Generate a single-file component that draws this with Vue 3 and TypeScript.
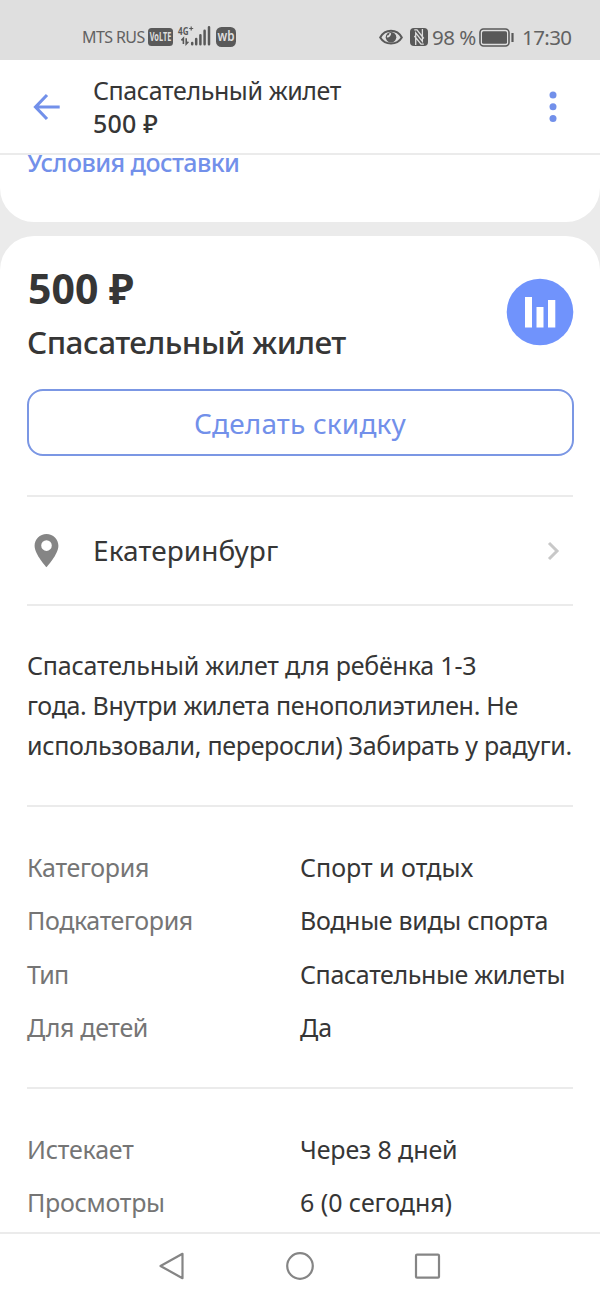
<script setup lang="ts">
interface Line { text: string; tracking: number }
interface Row { label: Line; value: Line }

const description: Line[] = [
  { text: 'Спасательный жилет для ребёнка 1-3', tracking: -0.19 },
  { text: 'года. Внутри жилета пенополиэтилен. Не', tracking: -0.33 },
  { text: 'использовали, переросли) Забирать у радуги.', tracking: -0.3 },
]

const details: Row[] = [
  { label: { text: 'Категория', tracking: -0.32 }, value: { text: 'Спорт и отдых', tracking: 0 } },
  { label: { text: 'Подкатегория', tracking: -0.38 }, value: { text: 'Водные виды спорта', tracking: -0.31 } },
  { label: { text: 'Тип', tracking: -0.8 }, value: { text: 'Спасательные жилеты', tracking: -0.38 } },
  { label: { text: 'Для детей', tracking: -0.32 }, value: { text: 'Да', tracking: 0 } },
]

const stats: Row[] = [
  { label: { text: 'Истекает', tracking: -0.2 }, value: { text: 'Через 8 дней', tracking: -0.12 } },
  { label: { text: 'Просмотры', tracking: -0.28 }, value: { text: '6 (0 сегодня)', tracking: -0.05 } },
]

const spacing = (line: Line) => ({ letterSpacing: `${line.tracking}px` })
</script>

<template>
  <div class="screen">
    <div class="status">
      <div class="status-left">
        <span class="carrier">MTS RUS</span>
        <svg class="volte" width="25" height="18" viewBox="0 0 25 18">
          <rect width="25" height="18" rx="3.5" fill="#595959" />
          <text x="12.5" y="13.2" text-anchor="middle" textLength="21.5" lengthAdjust="spacingAndGlyphs" class="badge-text">VoLTE</text>
        </svg>
        <svg class="signal" width="34" height="20" viewBox="0 0 34 20">
          <text x="0" y="8.8" textLength="10.5" lengthAdjust="spacingAndGlyphs" class="net-text">4G</text>
          <path d="M11.2 2.5h4M13.2 .5v4" stroke="#595959" stroke-width="1.2" />
          <path d="M5.4 18v-5.8l-2 2.2M8.2 12.2V18l2.2-2.3" fill="none" stroke="#595959" stroke-width="1.6" />
          <path d="M14.2 18.3v-1.4M18.2 18.3v-5.4M22.4 18.3V9.3M26.6 18.3V4.8M31 18.3V1.2" stroke="#595959" stroke-width="2.5" stroke-linecap="round" />
        </svg>
        <svg class="wb" width="20" height="20" viewBox="0 0 20 20">
          <rect width="20" height="20" rx="5.5" fill="#595959" />
          <text x="10" y="14.3" text-anchor="middle" textLength="17" lengthAdjust="spacingAndGlyphs" class="wb-text">wb</text>
        </svg>
      </div>
      <div class="status-right">
        <svg class="eye" width="24" height="17" viewBox="0 0 24 17">
          <path d="M1.2 8.5C6-.5 18-.5 22.8 8.5 18 16.5 6 16.5 1.2 8.5z" fill="none" stroke="#595959" stroke-width="2" />
          <circle cx="12" cy="8.3" r="5.3" fill="#595959" />
          <path d="M11.200 4.200a3 3 0 0 1-3.200 3.300" fill="none" stroke="#dfdfdf" stroke-width="1.800" />
        </svg>
        <svg class="nfc" width="18" height="18" viewBox="0 0 18 18">
          <rect width="18" height="18" rx="4" fill="#595959" />
          <path d="M5.700 17V4.800L12.400 13.300V1M4.300 1.800H7L13.800 10.500M13.800 16.200H11L4.400 8" fill="none" stroke="#dfdfdf" stroke-width="1.300" />
        </svg>
        <span class="percent">98 %</span>
        <svg class="battery" width="35" height="19" viewBox="0 0 35 19">
          <rect x="1" y="1" width="29" height="17" rx="3.500" fill="none" stroke="#595959" stroke-width="1.600" />
          <rect x="3" y="3.200" width="25" height="12.600" rx="1.500" fill="#595959" />
          <path d="M33.500 5v9" stroke="#595959" stroke-width="2.200" />
        </svg>
        <span class="clock">17:30</span>
      </div>
    </div>

    <header class="header">
      <svg class="back" width="28" height="28" viewBox="0 0 28 28">
        <path d="M26.700 14H3M14 2L2.500 14 14 26" fill="none" stroke="#7290ea" stroke-width="3.100" />
      </svg>
      <div class="heading">
        <div class="heading-title">Спасательный жилет</div>
        <div class="heading-price">500 ₽</div>
      </div>
      <svg width="8" height="32" viewBox="0 0 8 32">
        <g fill="#7290ea">
          <circle cx="4" cy="4" r="3.500" />
          <circle cx="4" cy="15.700" r="3.500" />
          <circle cx="4" cy="27.400" r="3.500" />
        </g>
      </svg>
    </header>

    <section class="card delivery">
      <a class="delivery-link">Условия доставки</a>
    </section>

    <main class="card item">
      <div class="summary">
        <div>
          <div class="price">500 ₽</div>
          <h1 class="title">Спасательный жилет</h1>
        </div>
        <svg class="stats-icon" width="68" height="68" viewBox="0 0 68 68">
          <circle cx="34" cy="34" r="33.300" fill="#7093fc" />
          <path d="M19 19h7v30.500h-7zM30.500 29h7v20.500h-7zM42 22h7.300v27.500H42z" fill="#fff" />
        </svg>
      </div>
      <button class="discount">Сделать скидку</button>

      <div class="location">
        <svg width="25" height="34" viewBox="0 0 25 34">
          <path d="M12.500 0C5.800 0 .600 5.200.600 11.800c0 8.700 11.900 21.500 11.900 21.500s11.900-12.800 11.900-21.500C24.400 5.200 19.200 0 12.500 0zm0 6.300a5.300 5.300 0 1 1 0 10.600 5.300 5.300 0 0 1 0-10.600z" fill="#858585" />
        </svg>
        <span class="city">Екатеринбург</span>
        <svg width="14" height="20" viewBox="0 0 14 20">
          <path d="M2 2L10 10l-8 8" fill="none" stroke="#c8c8c8" stroke-width="3" />
        </svg>
      </div>

      <div class="description">
        <div v-for="line in description" :key="line.text" :style="spacing(line)">{{ line.text }}</div>
      </div>

      <dl class="rows details">
        <div v-for="row in details" :key="row.label.text" class="row">
          <dt :style="spacing(row.label)">{{ row.label.text }}</dt>
          <dd :style="spacing(row.value)">{{ row.value.text }}</dd>
        </div>
      </dl>
      <dl class="rows">
        <div v-for="row in stats" :key="row.label.text" class="row">
          <dt :style="spacing(row.label)">{{ row.label.text }}</dt>
          <dd :style="spacing(row.value)">{{ row.value.text }}</dd>
        </div>
      </dl>
    </main>

    <nav class="nav">
      <svg width="28" height="30" viewBox="0 0 28 30">
        <path d="M24.500 2.800v24.400L2.500 15z" fill="none" stroke="#858585" stroke-width="2.200" stroke-linejoin="round" />
      </svg>
      <svg width="28" height="30" viewBox="0 0 28 30">
        <circle cx="14" cy="15" r="12.800" fill="none" stroke="#858585" stroke-width="2.200" />
      </svg>
      <svg width="28" height="30" viewBox="0 0 28 30">
        <rect x="3" y="3.700" width="23" height="23" rx="1" fill="none" stroke="#858585" stroke-width="2.200" />
      </svg>
    </nav>
  </div>
</template>

<style>
body { margin: 0; background: #fff; }
</style>

<style scoped>
.screen {
  width: 600px;
  height: 1299px;
  display: flex;
  flex-direction: column;
  overflow: hidden;
  background: #ebebeb;
  color: #363636;
  font-family: "Noto Sans", "Open Sans", sans-serif;
  font-size: 25px;
}
.screen * { box-sizing: border-box; }
svg { display: block; flex: none; overflow: visible; }
.status {
  flex: none;
  height: 60px;
  padding: 14px 28px 0 82px;
  display: flex;
  justify-content: space-between;
  align-items: center;
  background: #dfdfdf;
  color: #626262;
  white-space: nowrap;
}
.status-left, .status-right { display: flex; align-items: center; }
.carrier { width: 65.500px; font-size: 16px; letter-spacing: -0.600px; line-height: 20px; }
.signal { margin: 0 5px 2px 5px; }
.wb { margin-left: -1px; }
.badge-text { font: 700 12px "Noto Sans", sans-serif; fill: #dfdfdf; }
.net-text { font: 700 10px "Noto Sans", sans-serif; fill: #595959; }
.wb-text { font: 600 14px "Noto Sans", sans-serif; fill: #dfdfdf; }
.eye { margin-right: 1px; }
.nfc { margin: 0 4px 0 6px; }
.percent { width: 47px; font-size: 20.500px; letter-spacing: -0.500px; line-height: 24px; }
.clock { width: 50px; margin-left: 8px; font-size: 20.500px; letter-spacing: -0.600px; line-height: 24px; }
.header {
  flex: none;
  height: 95px;
  padding: 0 43px 0 33px;
  display: flex;
  align-items: center;
  background: #fff;
  border-bottom: 2px solid #ebebeb;
}
.heading { flex: 1; margin-left: 32px; padding-top: 1px; line-height: 33.500px; }
.heading-title { letter-spacing: -0.400px; }
.heading-price { font-weight: 500; letter-spacing: 0.200px; }
.card { background: #fff; }
.delivery {
  flex: none;
  height: 67px;
  padding-left: 27px;
  overflow: hidden;
  border-radius: 0 0 34px 34px;
}
.delivery-link {
  display: block;
  margin-top: -9px;
  line-height: 33px;
  font-weight: 500;
  letter-spacing: -0.550px;
  color: #7290ea;
}
.item {
  flex: 1;
  min-height: 0;
  margin-top: 13.500px;
  padding: 25.500px 27px 0;
  border-radius: 34px 34px 0 0;
  overflow: hidden;
}
.summary { display: flex; justify-content: space-between; height: 128px; }
.price { margin-left: 1px; font-size: 41px; font-weight: 700; line-height: 54px; letter-spacing: 0; }
.title { margin: 2px 0 0; font-size: 31.500px; font-weight: 500; line-height: 50px; letter-spacing: -0.560px; }
.stats-icon { margin-top: 17px; margin-right: -1px; }
.discount {
  display: block;
  width: calc(100% + 1px);
  height: 67px;
  margin: 0 -0.500px;
  padding: 0;
  border: 2px solid #7b97e4;
  border-radius: 16px;
  background: #fff;
  color: #7290ea;
  font-family: inherit;
  font-size: 28px;
  line-height: 60px;
  letter-spacing: 0.150px;
}
.location {
  margin-top: 39px;
  height: 111px;
  padding: 0 12px 0 7px;
  display: flex;
  align-items: center;
  border-top: 2px solid #ebebeb;
  border-bottom: 2px solid #ebebeb;
}
.city { flex: 1; margin-left: 34px; padding-bottom: 1px; font-size: 28px; line-height: 40px; letter-spacing: 0.080px; }
.description {
  height: 201px;
  padding-top: 39px;
  line-height: 40px;
  white-space: nowrap;
  border-bottom: 2px solid #ebebeb;
}
.rows { margin: 0; padding-top: 34px; }
.details { height: 282px; border-bottom: 2px solid #ebebeb; }
.row { height: 53.330px; display: grid; grid-template-columns: 1fr 1fr; line-height: 53.330px; white-space: nowrap; }
dt { color: #757575; }
dd { margin: 0; }
.nav {
  flex: none;
  height: 67px;
  padding: 0 159px 2px 158px;
  display: flex;
  justify-content: space-between;
  align-items: center;
  background: #fff;
  border-top: 2px solid #ebebeb;
}
</style>
